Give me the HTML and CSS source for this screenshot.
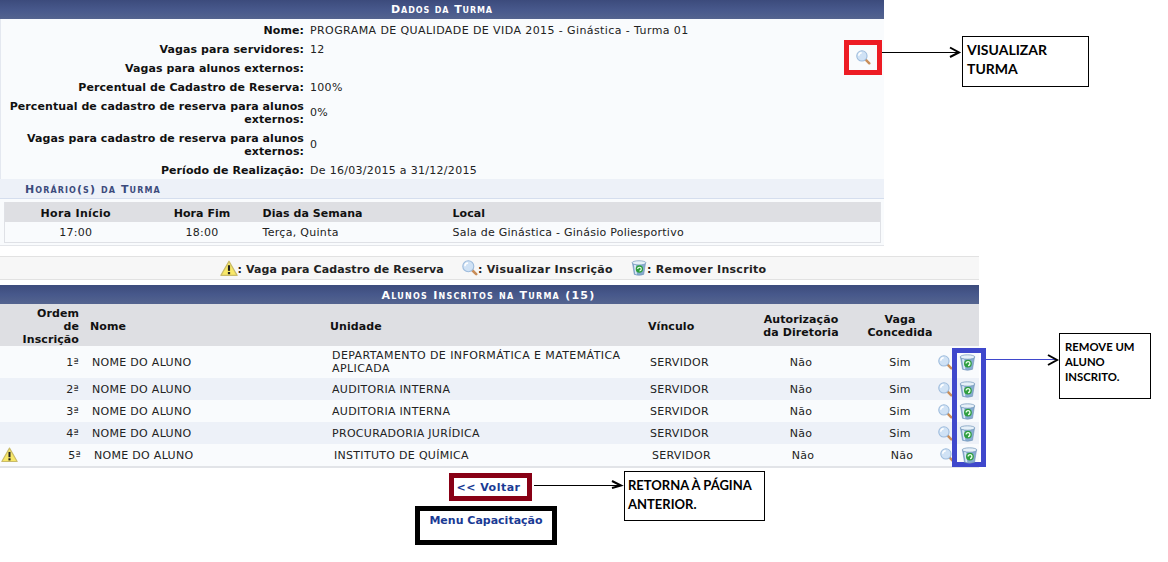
FILE: index.html
```html
<!DOCTYPE html>
<html lang="pt-BR">
<head>
<meta charset="utf-8">
<title>Dados da Turma</title>
<link rel="stylesheet" href="styles.css">
</head>
<body>
<svg width="0" height="0" class="defs">
  <defs>
    <symbol id="mag" viewBox="0 0 16 16">
      <path d="M10 10L14.2 14.2" stroke="#c98d58" stroke-width="2.6" stroke-linecap="round"/>
      <circle cx="6.3" cy="6.3" r="5.5" fill="#d0e2f5" stroke="#9dbbdc" stroke-width="1.1"/>
      <path d="M2.9 6.2a3.4 3.4 0 0 1 3.2-3.3" fill="none" stroke="#fff" stroke-width="1.5"/>
    </symbol>
    <symbol id="trash" viewBox="0 0 16 17">
      <path d="M1 3L3 15.3Q8 17.2 13 15.3L15 3Z" fill="#86abd0" stroke="#6c91b5" stroke-width=".6"/>
      <path d="M2.6 5L4 14.8L5.8 15.4L4.8 5Z" fill="#dce9f5"/>
      <ellipse cx="8" cy="3" rx="7.4" ry="2.2" fill="#e6f0f8" stroke="#6f94b8" stroke-width=".7"/>
      <circle cx="8.4" cy="9.6" r="3.9" fill="#2f9e3f"/>
      <path d="M6.6 9.6a1.9 1.9 0 1 1 1.9 1.9" fill="none" stroke="#eaffea" stroke-width="1.3"/>
    </symbol>
    <symbol id="warn" viewBox="0 0 16 15">
      <path d="M8 1L15.2 13.6H.8Z" fill="#f8e868" stroke="#c9bb6a" stroke-width="1.1" stroke-linejoin="round"/>
      <path d="M8 4.6V9.6" stroke="#222" stroke-width="1.9"/>
      <rect x="7" y="10.6" width="2" height="2" fill="#222"/>
    </symbol>
  </defs>
</svg>

<main class="page">
  <section class="turma">
    <h2 class="caption">Dados da Turma</h2>
    <div class="info">
      <div class="info-row"><span class="label">Nome:</span><span class="value wide">PROGRAMA DE QUALIDADE DE VIDA 2015 - Ginástica - Turma 01</span></div>
      <div class="info-row"><span class="label">Vagas para servidores:</span><span class="value">12</span></div>
      <div class="info-row"><span class="label">Vagas para alunos externos:</span><span class="value"></span></div>
      <div class="info-row"><span class="label">Percentual de Cadastro de Reserva:</span><span class="value">100%</span></div>
      <div class="info-row double"><span class="label">Percentual de cadastro de reserva para alunos externos:</span><span class="value">0%</span></div>
      <div class="info-row double"><span class="label">Vagas para cadastro de reserva para alunos externos:</span><span class="value">0</span></div>
      <div class="info-row final"><span class="label">Período de Realização:</span><span class="value">De 16/03/2015 a 31/12/2015</span></div>
    </div>
    <h3 class="subcaption">Horário(s) da Turma</h3>
    <div class="horario-wrap">
      <table class="horario">
        <colgroup><col class="h1"><col class="h2"><col class="h3"><col class="h4"></colgroup>
        <thead><tr><th class="center inicio">Hora Início</th><th class="center fim">Hora Fim</th><th>Dias da Semana</th><th>Local</th></tr></thead>
        <tbody><tr><td class="center">17:00</td><td class="center fim">18:00</td><td>Terça, Quinta</td><td class="local">Sala de Ginástica - Ginásio Poliesportivo</td></tr></tbody>
      </table>
    </div>
  </section>

  <div class="legend">
    <svg class="ico-legend warn-l"><use href="#warn"/></svg><span>: Vaga para Cadastro de Reserva</span>
    <svg class="ico-legend"><use href="#mag"/></svg><span class="leg-wide">: Visualizar Inscrição</span>
    <svg class="ico-legend"><use href="#trash"/></svg><span class="leg-wide">: Remover Inscrito</span>
  </div>

  <section class="alunos">
    <h2 class="caption">Alunos Inscritos na Turma (15)</h2>
    <table class="lista">
      <colgroup><col class="c1"><col class="c2"><col class="c3"><col class="c4"><col class="c5"><col class="c6"><col class="c7"><col class="c8"></colgroup>
      <thead>
        <tr><th class="right">Ordem<br>de<br>Inscrição</th><th>Nome</th><th>Unidade</th><th>Vínculo</th><th class="center">Autorização<br>da Diretoria</th><th class="center vaga">Vaga<br>Concedida</th><th></th><th></th></tr>
      </thead>
      <tbody>
        <tr class="tall"><td class="right">1ª</td><td>NOME DO ALUNO</td><td class="wide">DEPARTAMENTO DE INFORMÁTICA E MATEMÁTICA APLICADA</td><td>SERVIDOR</td><td class="center">Não</td><td class="center vaga">Sim</td><td class="ic"><svg class="ico"><use href="#mag"/></svg></td><td class="ic"><svg class="ico-t"><use href="#trash"/></svg></td></tr>
        <tr class="alt"><td class="right">2ª</td><td>NOME DO ALUNO</td><td>AUDITORIA INTERNA</td><td>SERVIDOR</td><td class="center">Não</td><td class="center vaga">Sim</td><td class="ic"><svg class="ico"><use href="#mag"/></svg></td><td class="ic"><svg class="ico-t"><use href="#trash"/></svg></td></tr>
        <tr><td class="right">3ª</td><td>NOME DO ALUNO</td><td>AUDITORIA INTERNA</td><td>SERVIDOR</td><td class="center">Não</td><td class="center vaga">Sim</td><td class="ic"><svg class="ico"><use href="#mag"/></svg></td><td class="ic"><svg class="ico-t"><use href="#trash"/></svg></td></tr>
        <tr class="alt"><td class="right">4ª</td><td>NOME DO ALUNO</td><td>PROCURADORIA JURÍDICA</td><td>SERVIDOR</td><td class="center">Não</td><td class="center vaga">Sim</td><td class="ic"><svg class="ico"><use href="#mag"/></svg></td><td class="ic"><svg class="ico-t"><use href="#trash"/></svg></td></tr>
        <tr class="last"><td class="right warn-cell"><svg class="ico-w"><use href="#warn"/></svg>5ª</td><td>NOME DO ALUNO</td><td>INSTITUTO DE QUÍMICA</td><td>SERVIDOR</td><td class="center">Não</td><td class="center vaga">Não</td><td class="ic"><svg class="ico"><use href="#mag"/></svg></td><td class="ic"><svg class="ico-t"><use href="#trash"/></svg></td></tr>
      </tbody>
    </table>
  </section>

  <nav class="actions">
    <a class="voltar" href="#">&lt;&lt; Voltar</a>
    <a class="menu" href="#">Menu Capacitação</a>
  </nav>
</main>

<div class="mark mark-red"><svg class="ico-big"><use href="#mag"/></svg></div>
<div class="mark mark-blue"></div>
<div class="note note-1">VISUALIZAR<br>TURMA</div>
<div class="note note-2">REMOVE UM<br>ALUNO<br>INSCRITO.</div>
<div class="note note-3">RETORNA À PÁGINA<br>ANTERIOR.</div>

<svg class="arrows" width="1168" height="562" viewBox="0 0 1168 562">
  <path d="M882 52.5H959" stroke="#000" fill="none"/>
  <path d="M950 47.5L959 52.5L950 57" stroke="#000" stroke-width="2" fill="none"/>
  <path d="M986 359.5H1056" stroke="#3f48cc" fill="none"/>
  <path d="M1048 355L1057 360L1048 365" stroke="#000" stroke-width="2" fill="none"/>
  <path d="M534 485.5H621" stroke="#000" fill="none"/>
  <path d="M612 481L621 485.5L612 488" stroke="#000" stroke-width="2" fill="none"/>
</svg>
</body>
</html>
```
FILE: styles.css
```css
html, body { margin: 0; padding: 0; background: #fff; }
body {
  position: relative;
  width: 1168px;
  height: 562px;
  overflow: hidden;
  font-family: "DejaVu Sans", Verdana, sans-serif;
  font-size: 11px;
  letter-spacing: .3px;
  color: #222;
}
.defs { position: absolute; }
.page { width: 979px; }
.wide { letter-spacing: .41px; }

.caption {
  margin: 0;
  height: 19px;
  line-height: 20px;
  text-align: center;
  font-size: 11px;
  font-weight: bold;
  font-variant: small-caps;
  letter-spacing: .9px;
  color: #fff;
  background: linear-gradient(#3c4b7c, #47588b 50%, #54648f);
}
.alunos .caption { letter-spacing: 1.25px; line-height: 21px; padding-right: 2px; box-sizing: border-box; }

.turma {
  width: 884px;
  height: 246px;
  background: #f9fbfd;
  border-bottom: 1px solid #e4e6ea;
  box-sizing: border-box;
}
.info { border-left: 1px solid #e4e8f0; padding-top: 2px; }
.info-row {
  display: grid;
  grid-template-columns: 303px 1fr;
  column-gap: 6px;
  align-items: center;
  height: 19px;
}
.info-row.double { height: 32px; }
.info-row.final { height: 18px; }
.label { font-weight: bold; text-align: right; color: #111; padding-left: 6px; line-height: 13px; letter-spacing: .08px; }
.value { line-height: 13px; }
.double .value { padding-bottom: 2px; }

.subcaption {
  margin: 0;
  height: 19px;
  line-height: 21px;
  padding-left: 25px;
  font-size: 11px;
  font-weight: bold;
  font-variant: small-caps;
  letter-spacing: 1.1px;
  color: #3c4b7c;
  background: #edf1f8;
  border-bottom: 1px solid #d5deee;
}

.horario-wrap { padding: 3px 3px 0 4px; }
table { border-collapse: collapse; table-layout: fixed; }
.horario { width: 877px; border: 1px solid #dfe1e6; border-top: 0; }
.horario th { background: #dedfe3; height: 18px; padding: 2px 0 0; text-align: left; color: #111; letter-spacing: .05px; }
.horario td { height: 20px; padding: 0; background: #f9fbfd; }
.horario .fim { padding-right: 5px; }
.horario .inicio { letter-spacing: .3px; }
.horario .local { letter-spacing: .25px; }
.h1 { width: 142px; }
.h2 { width: 116px; }
.h3 { width: 190px; }
.center { text-align: center !important; }
.right { text-align: right !important; }

.legend {
  margin-top: 10px;
  padding: 3px 0 0 7px;
  height: 19px;
  background: #f7f7f7;
  border-top: 1px solid #e2e2e2;
  border-bottom: 1px solid #e2e2e2;
  display: flex;
  align-items: center;
  justify-content: center;
  font-weight: bold;
  letter-spacing: .1px;
  color: #222;
}
.leg-wide { letter-spacing: .3px; }
.ico-legend { width: 16px; height: 16px; margin-left: 18px; margin-top: -3px; }
.ico-legend.warn-l { width: 18px; height: 17px; margin-left: 0; }

.alunos { margin-top: 5px; }
.lista { width: 979px; border-bottom: 2px solid #e2e4e8; }
.lista th {
  background: #dedfe3;
  height: 40px;
  padding: 2px 0 0;
  text-align: left;
  line-height: 13px;
  color: #111;
  letter-spacing: .08px;
}
.lista td { padding: 0 0 0 2px; height: 22px; background: #f9fbfd; line-height: 13px; }
.lista tr.tall td { height: 32px; }
.lista tr.alt td { background: #edf1f8; }
.lista .c1 { width: 90px; }
.lista .c2 { width: 240px; }
.lista .c3 { width: 318px; }
.lista .c4 { width: 103px; }
.lista .c5 { width: 100px; }
.lista .c6 { width: 87px; }
.lista .c7 { width: 21px; }
.lista .c8 { width: 20px; }
.lista th.right, .lista td.right { padding: 0 11px 0 0; }
.lista th.right { padding-top: 2px; }
.lista td.center { padding: 0; }
.lista .vaga, .lista td.vaga { padding-left: 11px; }
.lista td.ic { padding: 0; }
.lista tr.last td { padding-left: 4px; }
.lista tr.last td.center { padding-left: 4px; }
.lista tr.last td.vaga { padding-left: 15px; }
.lista tr.last td.ic { padding-left: 2px; }
.lista tr.last td.warn-cell { position: relative; padding: 0 9px 0 0; }
.ico { width: 15px; height: 15px; display: block; }
.ico-t { width: 17px; height: 17px; display: block; position: relative; z-index: 2; }
.ico-w { position: absolute; left: 1px; top: 3px; width: 17px; height: 16px; }

.actions { height: 90px; padding-top: 5px; display: flex; flex-direction: column; align-items: flex-start; }
.actions a { font-weight: bold; color: #1a3a94; text-decoration: none; box-sizing: border-box; text-align: center; line-height: 19px; }
.voltar {
  margin-left: 449px;
  width: 83px;
  height: 28px;
  padding-right: 4px;
  border: 5px solid #880015;
  letter-spacing: .5px;
  white-space: nowrap;
}
.menu {
  margin-left: 415px;
  margin-top: 5px;
  width: 142px;
  height: 39px;
  border: 5px solid #000;
  letter-spacing: 0;
}

.mark { position: absolute; box-sizing: border-box; }
.mark-red { left: 844px; top: 40px; width: 38px; height: 35px; border: 5px solid #ed1c24; display: flex; align-items: center; justify-content: center; }
.ico-big { width: 15px; height: 15px; }
.mark-blue { left: 952px; top: 348px; width: 34px; height: 119px; border: 5px solid #3f48cc; }

.note {
  position: absolute;
  box-sizing: border-box;
  background: #fff;
  border: 1px solid #000;
  font-family: Lato, "Open Sans", sans-serif;
  font-weight: bold;
  font-size: 14px;
  letter-spacing: 0;
  white-space: nowrap;
  color: #000;
}
.note-1 { left: 962px; top: 36px; width: 127px; height: 51px; padding: 3px 0 0 4px; line-height: 19px; }
.note-2 { left: 1059px; top: 333px; width: 92px; height: 66px; padding: 5px 0 0 5px; font-size: 11.3px; line-height: 15px; }
.note-3 { left: 624px; top: 471px; width: 141px; height: 50px; padding: 4px 0 0 3px; font-size: 13px; line-height: 19px; }

.arrows { position: absolute; left: 0; top: 0; pointer-events: none; }
```
